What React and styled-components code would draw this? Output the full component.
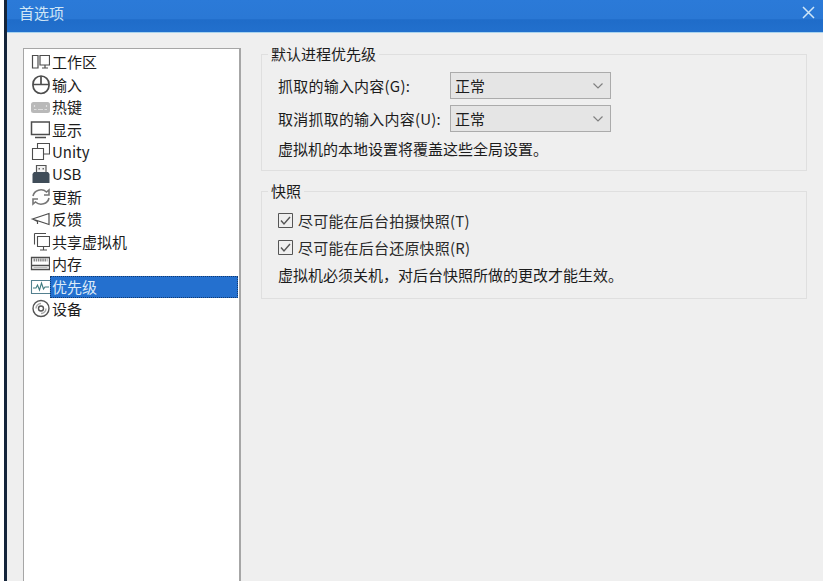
import React from 'react'
import styled, { createGlobalStyle } from 'styled-components'

const GlobalStyle = createGlobalStyle`
  html, body { margin: 0; padding: 0; height: 100%; overflow: hidden; background: #fff; }
  #root { height: 100%; }
  * { box-sizing: border-box; }
`

const Page = styled.div`
  width: 823px;
  height: 581px;
  padding-left: 4px;
  background: #fff;
  overflow: hidden;
`
const Win = styled.div`
  height: 100%;
  display: flex;
  flex-direction: column;
  background: #efefef;
  color: #1c1c1c;
  font-family: "Noto Sans CJK SC", "Liberation Sans", sans-serif;
  font-size: 15px;
  border-left: 3px solid #14243a;
`
const TitleBar = styled.div`
  flex: none;
  height: 33px;
  padding: 0 8px 7px 12px;
  display: flex;
  align-items: center;
  justify-content: space-between;
  background: linear-gradient(#2b7ad8 0, #2a78d5 58%, #1f6cc9 62%, #2270cd 100%);
  border-bottom: 1px solid #a9d3ee;
  color: #cfe5f5;
  font-size: 15px;
`
const Body = styled.div`
  flex: 1;
  min-height: 0;
  display: flex;
  gap: 20px;
  padding: 15px 16px 0 16px;
`
const List = styled.div`
  flex: none;
  width: 218px;
  padding: 2px 1px 0 5px;
  background: #fff;
  border: 1px solid #a6a6a6;
  border-bottom: none;
  border-right-width: 2px;
`
const Row = styled.div`
  height: 22.45px;
  display: flex;
  align-items: center;
  line-height: 22px;
  white-space: nowrap;
`
const IconBox = styled.span`
  flex: none;
  width: 21px;
  height: 22px;
  display: flex;
  align-items: center;
  justify-content: center;
  color: #4d4d4d;
`
const RowText = styled.span`
  flex: 1;
  height: 22px;
  padding-left: 2px;
  color: ${p => (p.$selected ? '#dceaf8' : '#1c1c1c')};
  background: ${p => (p.$selected ? '#2470cf' : 'transparent')};
  outline: ${p => (p.$selected ? '1px dotted #123a70' : 'none')};
  outline-offset: -1px;
`
const Right = styled.div`
  flex: 1;
  display: flex;
  flex-direction: column;
  gap: 20px;
  padding-top: 6px;
`
const GroupWrap = styled.div`
  position: relative;
`
const Group = styled.div`
  border: 1px solid #dfdfdf;
  padding: ${p => p.$top}px 16px 0;
  height: ${p => p.$height}px;
  display: flex;
  flex-direction: column;
`
const GroupTitle = styled.span`
  position: absolute;
  left: 7px;
  top: -10px;
  padding: 0 3px;
  line-height: 20px;
  background: #efefef;
`
const FieldRow = styled.div`
  height: 27px;
  margin-bottom: 6px;
  display: flex;
  align-items: center;
`
const FieldLabel = styled.span`
  width: 172px;
  white-space: nowrap;
  letter-spacing: 0.22px;
`
const SelectBox = styled.div`
  width: 161px;
  height: 27px;
  padding: 0 6px 0 4px;
  display: flex;
  align-items: center;
  justify-content: space-between;
  background: #e5e5e5;
  border: 1px solid #ababab;
`
const Note = styled.div`
  height: 22px;
  line-height: 22px;
  margin-top: ${p => p.$gap || 0}px;
  white-space: nowrap;
`
const CheckRow = styled.div`
  height: 27px;
  display: flex;
  align-items: center;
  gap: 5px;
  white-space: nowrap;
  letter-spacing: 0.2px;
  color: #2a2a2a;
`

const svg = { width: 20, height: 20, viewBox: '0 0 20 20', fill: 'none', stroke: 'currentColor', strokeWidth: 1.2 }

const WorkIcon = () => (
  <svg {...svg}>
    <path d="M2.500 3.500h5.500v12.500H2.500zM10 3.500h9.500v9.500H10zM15 13v2.500M12 16h6" />
  </svg>
)
const MouseIcon = () => (
  <svg {...svg} strokeWidth={1.7}>
    <rect x="3" y="1" width="16" height="17.500" rx="8" />
    <path d="M3 9.500h16M11 1v8.500" />
  </svg>
)
const KeyIcon = () => (
  <svg {...svg} stroke="none">
    <rect x="1" y="5" width="19" height="11" rx="2.500" fill="#b9b9b9" />
    <path d="M4 12.500h2.500M8 12.500h5M14.500 12.500h2.500M4.500 8v2M16.500 8v2" stroke="#dedede" strokeWidth="1.200" />
  </svg>
)
const ScreenIcon = () => (
  <svg {...svg} strokeWidth={1.5}>
    <path d="M1.500 2h18v12.500h-18zM5 17.500h11" />
  </svg>
)
const UnityIcon = () => (
  <svg {...svg} strokeWidth={1.1}>
    <path d="M2.500 6.500h11v11h-11zM7.500 6V1.500h12V12H14" />
  </svg>
)
const UsbIcon = () => (
  <svg {...svg} stroke="none">
    <path d="M6.500 1.500h9.500v7H6.500z" fill="#f2f2f2" stroke="#555" />
    <path d="M4 8h14l1.500 2v9h-17v-9z" fill="#3f4c58" />
    <path d="M8.500 4h1.500v1.500H8.500zM12.500 4h1.500v1.500h-1.500z" fill="#666" />
  </svg>
)
const RefreshIcon = () => (
  <svg {...svg} strokeWidth={1.6} stroke="#777">
    <path d="M3 9a8 7.500 0 0 1 13.500-4l2.500-2v5h-5M19 11a8 7.500 0 0 1-13.500 4L3 17v-5h5" />
  </svg>
)
const HornIcon = () => (
  <svg {...svg}>
    <path d="M2.500 10L19 4.500v11zM2.500 10l5 2.500v2.500" />
  </svg>
)
const ShareIcon = () => (
  <svg {...svg} strokeWidth={1.1}>
    <path d="M4.500 1.500v11M4.500 1.500h11.500M7.500 4.500h12v10h-12zM13.500 14.500v3M10 18h7" />
  </svg>
)
const MemIcon = () => (
  <svg {...svg} strokeWidth={1.3}>
    <path d="M1.500 3.500h18v12h-18zM1.500 11.500h18" />
    <path d="M3.500 6h14" strokeWidth="3" strokeDasharray="1.500 .7" stroke="#8a8a8a" />
    <path d="M3.500 13.500h14" strokeWidth=".8" stroke="#aaa" />
  </svg>
)
const PulseIcon = () => (
  <svg {...svg} stroke="#54808f" strokeWidth={1.1}>
    <path d="M1.500 3.500h19v13h-19z" />
    <path d="M3 11h3l1.500-3 2 5 2-7 2 6 1.500-2h4" stroke="#3d7a7f" />
  </svg>
)
const DiscIcon = () => (
  <svg {...svg} stroke="#555" strokeWidth={1.4}>
    <circle cx="11" cy="9.500" r="8" />
    <circle cx="11" cy="9.500" r="2.500" />
    <path d="M6 9.500a5 5 0 0 1 5-5M16 9.500a5 5 0 0 1-5 5" stroke="#aaa" />
  </svg>
)
const Chevron = () => (
  <svg width="12" height="8" viewBox="0 0 12 8" fill="none" stroke="#808080" strokeWidth="1.200">
    <path d="M1.500 1.500L6 6l4.500-4.500" />
  </svg>
)
const CloseIcon = () => (
  <svg width="13" height="13" viewBox="0 0 13 13" fill="none" stroke="#cfe6f7" strokeWidth="1.500">
    <path d="M1 1l11 11M12 1L1 12" />
  </svg>
)
const CheckIcon = () => (
  <svg width="15" height="15" viewBox="0 0 15 15" fill="none" stroke="#555">
    <path d="M.500 .500h14v14H.500z" strokeWidth="1" />
    <path d="M3 7.500l3 3.500 6-7" strokeWidth="1.400" />
  </svg>
)

const items = [
  { label: '工作区', Icon: WorkIcon },
  { label: '输入', Icon: MouseIcon },
  { label: '热键', Icon: KeyIcon },
  { label: '显示', Icon: ScreenIcon },
  { label: 'Unity', Icon: UnityIcon },
  { label: 'USB', Icon: UsbIcon },
  { label: '更新', Icon: RefreshIcon },
  { label: '反馈', Icon: HornIcon },
  { label: '共享虚拟机', Icon: ShareIcon },
  { label: '内存', Icon: MemIcon },
  { label: '优先级', Icon: PulseIcon, selected: true },
  { label: '设备', Icon: DiscIcon },
]

export default function App() {
  return (
    <Page>
      <GlobalStyle />
      <Win>
        <TitleBar>
          首选项
          <CloseIcon />
        </TitleBar>
        <Body>
          <List>
            {items.map(({ label, Icon, selected }) => (
              <Row key={label}>
                <IconBox><Icon /></IconBox>
                <RowText $selected={selected}>{label}</RowText>
              </Row>
            ))}
          </List>
          <Right>
            <GroupWrap>
              <GroupTitle>默认进程优先级</GroupTitle>
              <Group $height={117} $top={17}>
                <FieldRow>
                  <FieldLabel>抓取的输入内容(G):</FieldLabel>
                  <SelectBox>正常<Chevron /></SelectBox>
                </FieldRow>
                <FieldRow>
                  <FieldLabel>取消抓取的输入内容(U):</FieldLabel>
                  <SelectBox>正常<Chevron /></SelectBox>
                </FieldRow>
                <Note>虚拟机的本地设置将覆盖这些全局设置。</Note>
              </Group>
            </GroupWrap>
            <GroupWrap>
              <GroupTitle>快照</GroupTitle>
              <Group $height={108} $top={15}>
                <CheckRow><CheckIcon />尽可能在后台拍摄快照(T)</CheckRow>
                <CheckRow><CheckIcon />尽可能在后台还原快照(R)</CheckRow>
                <Note $gap={3}>虚拟机必须关机，对后台快照所做的更改才能生效。</Note>
              </Group>
            </GroupWrap>
          </Right>
        </Body>
      </Win>
    </Page>
  )
}
